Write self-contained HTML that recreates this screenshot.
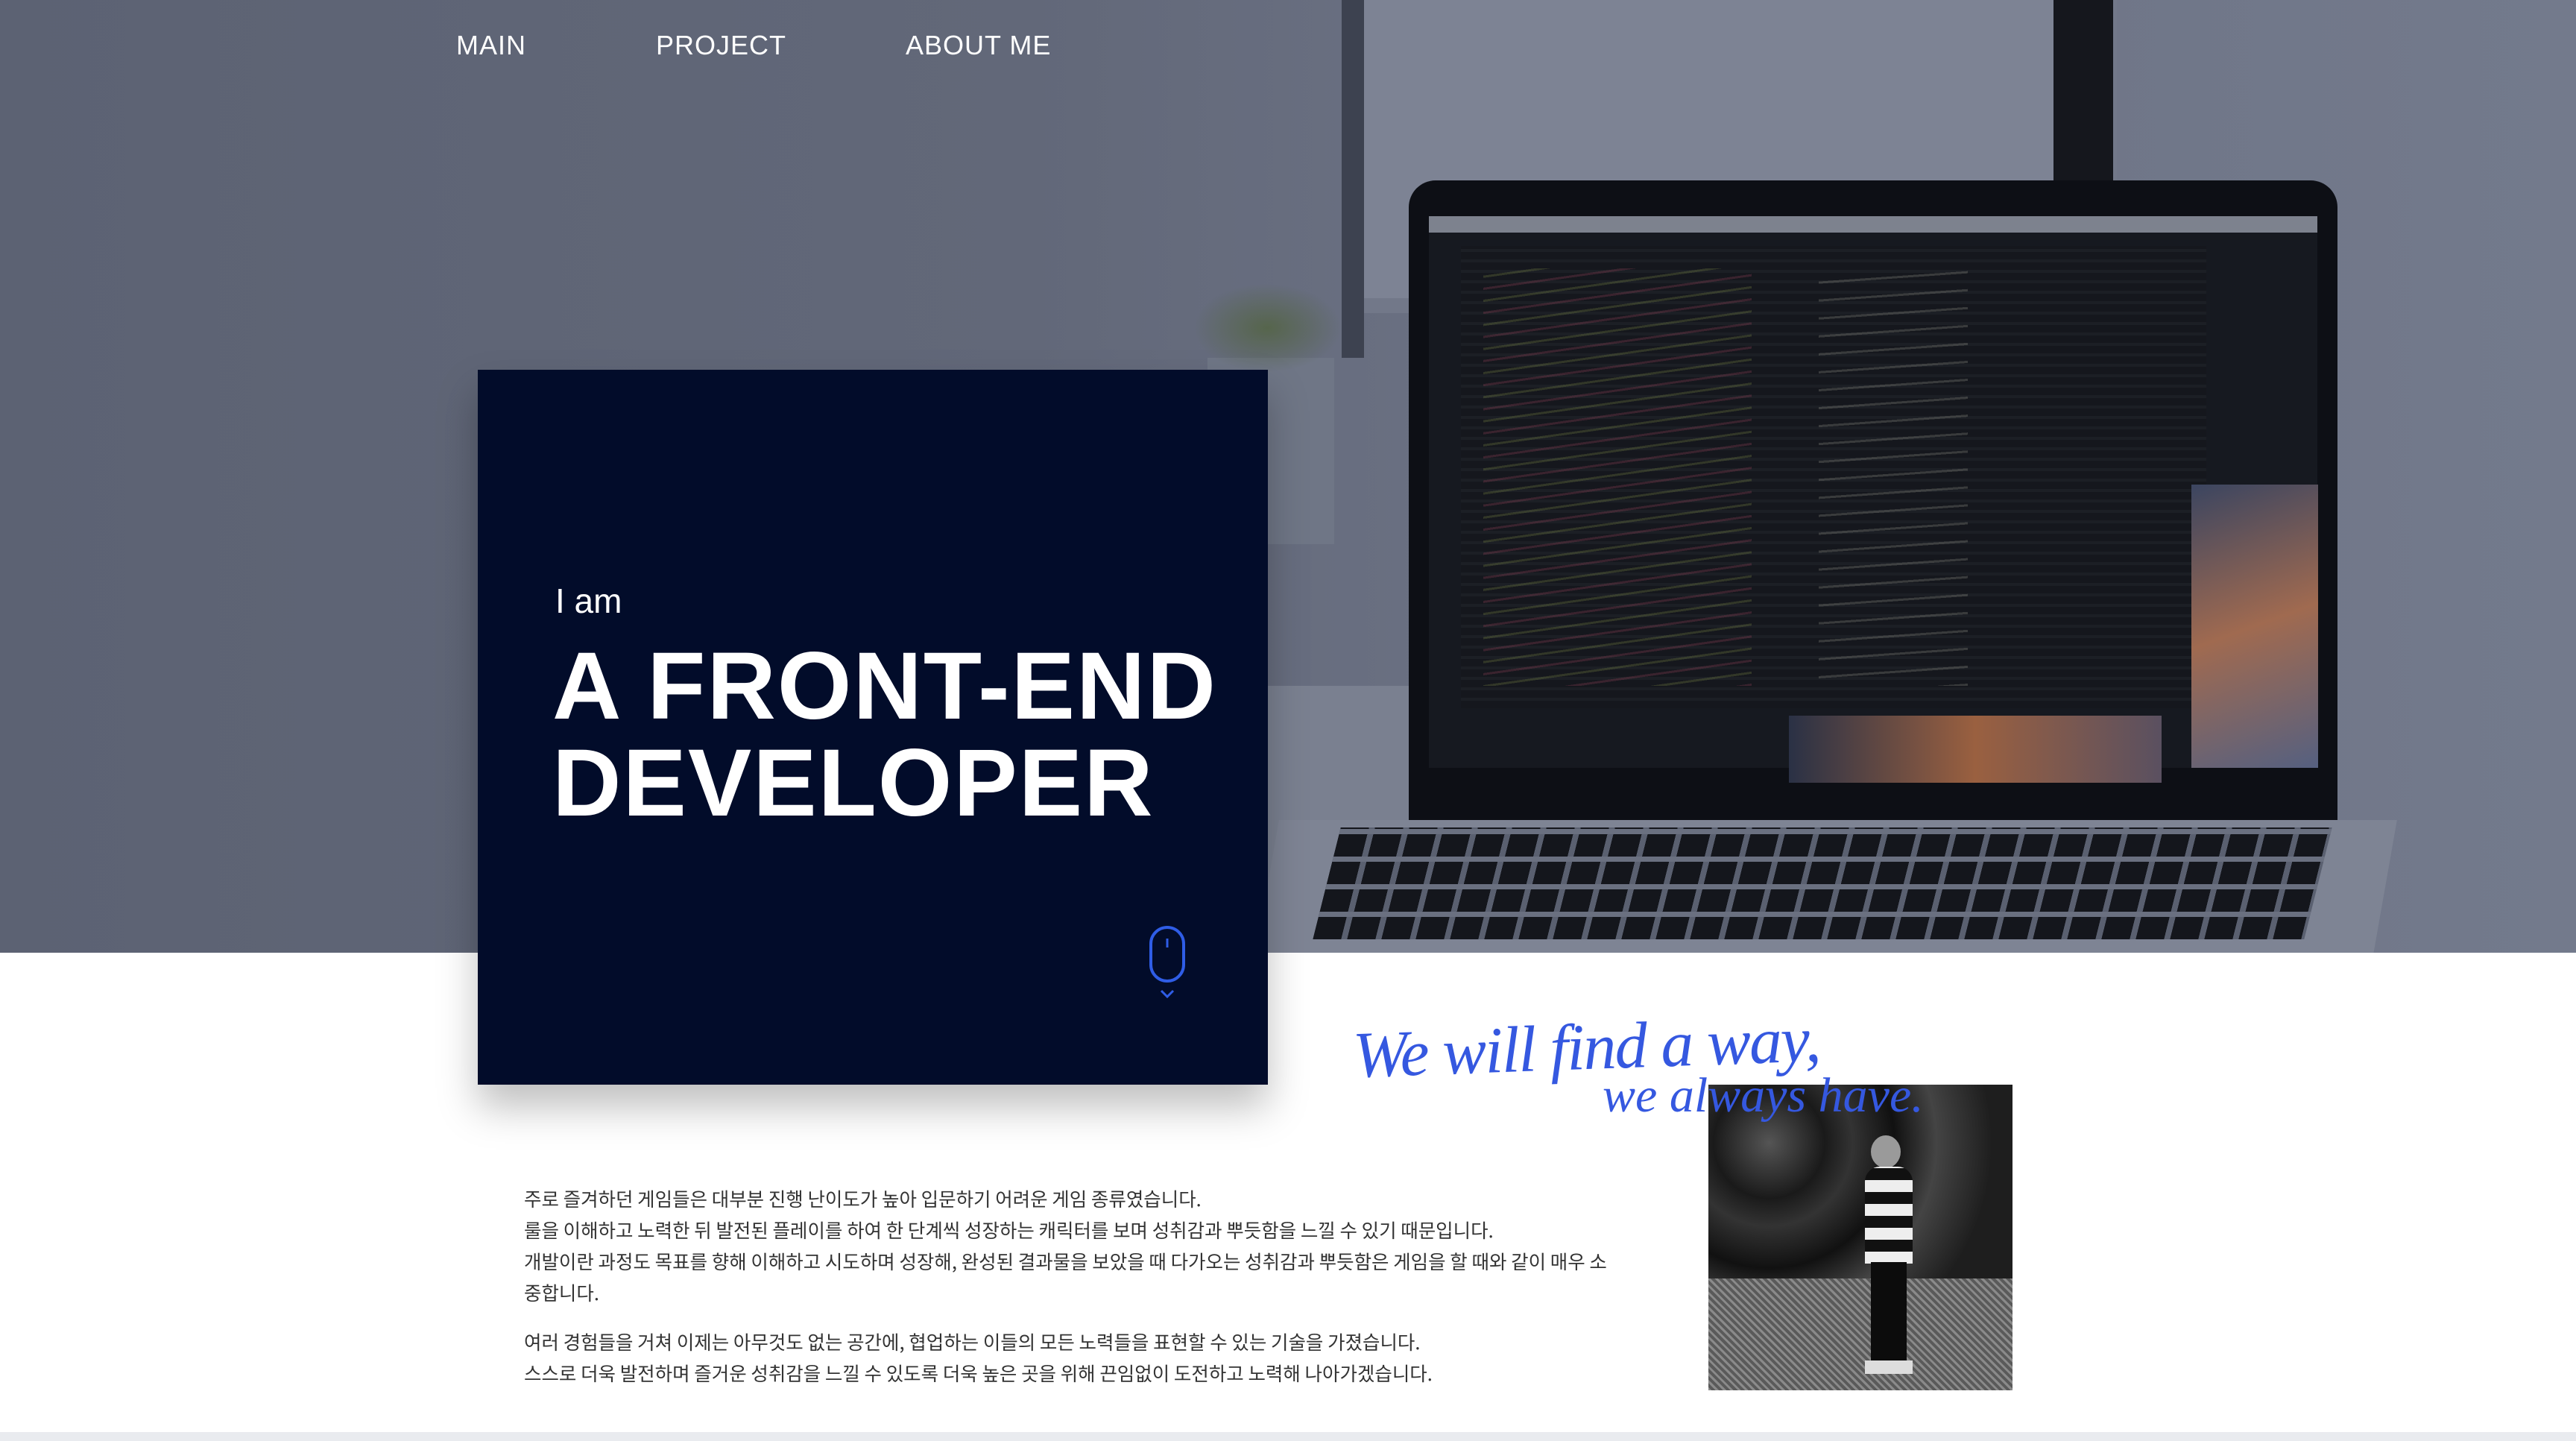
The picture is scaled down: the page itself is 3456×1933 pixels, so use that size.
<!DOCTYPE html>
<html><head><meta charset="utf-8">
<style>
*{margin:0;padding:0;box-sizing:border-box}
body{width:3456px;height:1933px;overflow:hidden;background:#fff;font-family:"Liberation Sans","Noto Sans CJK KR",sans-serif;position:relative}
.hero{position:absolute;left:0;top:0;width:3456px;height:1278px;background:linear-gradient(90deg,#5c6273 0%,#626879 40%,#6c7284 60%,#737a8c 100%);overflow:hidden}
.nav{position:absolute;top:40px;color:#fff;font-size:36px;letter-spacing:1px}
.abs{position:absolute}
.box{position:absolute;left:641px;top:496px;width:1060px;height:959px;background:#020c2a;box-shadow:0 30px 50px rgba(0,0,0,.25)}
.p{position:absolute;left:703px;font-family:"Noto Sans CJK KR",sans-serif;font-size:25.5px;color:#333;white-space:nowrap}
</style></head><body>
<div class="hero">
  <div class="abs" style="left:1810px;top:0;width:1030px;height:420px;background:#727889"></div>
  <div class="abs" style="left:1830px;top:0;width:930px;height:400px;background:#7d8394"></div>
  <div class="abs" style="left:2755px;top:0;width:80px;height:245px;background:#15171d"></div>
  <div class="abs" style="left:1800px;top:0;width:30px;height:480px;background:#3d4250"></div>
  <div class="abs" style="left:1620px;top:480px;width:170px;height:250px;background:#6f7686"></div>
  <div class="abs" style="left:1600px;top:380px;width:200px;height:120px;background:radial-gradient(ellipse,#56654c 0%,rgba(90,100,80,0) 70%)"></div>
  <div class="abs" style="left:1700px;top:920px;width:220px;height:360px;background:#7a8090"></div>
  <div class="abs" style="left:1890px;top:242px;width:1246px;height:940px;background:#0d0f15;border-radius:36px 36px 0 0"></div>
  <div class="abs" style="left:1917px;top:290px;width:1192px;height:740px;background:#161920"></div>
  <div class="abs" style="left:1917px;top:290px;width:1192px;height:22px;background:#7d828e"></div>
  <div class="abs" style="left:1960px;top:330px;width:1000px;height:620px;background:repeating-linear-gradient(0deg,#15171d 0 10px,#1c1f25 10px 14px)"></div>
  <div class="abs" style="left:1990px;top:360px;width:360px;height:560px;opacity:.6;background:repeating-linear-gradient(-8deg,rgba(200,80,110,.35) 0 3px,rgba(0,0,0,0) 3px 16px,rgba(180,200,90,.3) 16px 19px,rgba(0,0,0,0) 19px 32px)"></div>
  <div class="abs" style="left:2440px;top:360px;width:200px;height:560px;opacity:.6;background:repeating-linear-gradient(-4deg,rgba(220,220,200,.3) 0 3px,rgba(0,0,0,0) 3px 24px)"></div>
  <div class="abs" style="left:2940px;top:650px;width:170px;height:380px;background:linear-gradient(160deg,#3b4560,#a06a50 50%,#556080)"></div>
  <div class="abs" style="left:2400px;top:960px;width:500px;height:90px;background:linear-gradient(90deg,#2a3145,#9a6040,#5a5060)"></div>
  <div class="abs" style="left:1700px;top:1100px;width:1500px;height:180px;background:#7e8494;transform:skewX(-10deg)"></div>
  <div class="abs" style="left:1780px;top:1110px;width:1330px;height:150px;background:repeating-linear-gradient(90deg,#14161c 0 38px,#5a6070 38px 46px);transform:skewX(-14deg)"></div>
  <div class="abs" style="left:1780px;top:1110px;width:1330px;height:150px;background:repeating-linear-gradient(0deg,rgba(0,0,0,0) 0 30px,#6a7080 30px 37px);transform:skewX(-14deg)"></div>
  <div class="nav" style="left:612px">MAIN</div>
  <div class="nav" style="left:880px">PROJECT</div>
  <div class="nav" style="left:1215px">ABOUT ME</div>
</div>
<div class="box">
  <div class="abs" style="left:104px;top:283px;color:#fff;font-size:46px;">I am</div>
  <div class="abs" style="left:100px;top:360px;color:#fff;font-size:128px;font-weight:bold;line-height:130px;letter-spacing:2px;white-space:nowrap">A FRONT-END<br>DEVELOPER</div>
  <svg class="abs" style="left:895px;top:745px" width="60" height="110" viewBox="0 0 60 110">
    <rect x="8" y="3" width="44" height="72" rx="22" fill="none" stroke="#2f5de6" stroke-width="4"/>
    <line x1="30" y1="18" x2="30" y2="30" stroke="#2f5de6" stroke-width="3"/>
    <polyline points="22,88 30,96 38,88" fill="none" stroke="#2f5de6" stroke-width="3"/>
  </svg>
</div>
<div class="abs" style="left:2292px;top:1455px;width:408px;height:410px;background:#333;overflow:hidden">
  <div class="abs" style="left:0;top:0;width:408px;height:260px;background:radial-gradient(circle at 20% 30%,#555 0,#1a1a1a 20%,#333 30%,#111 45%,#444 60%,#1e1e1e 80%)"></div>
  <div class="abs" style="left:0;top:260px;width:408px;height:150px;background:repeating-linear-gradient(45deg,#8a8a8a 0 3px,#5a5a5a 3px 7px)"></div>
  <div class="abs" style="left:218px;top:68px;width:40px;height:44px;border-radius:50%;background:#9a9a9a"></div>
  <div class="abs" style="left:210px;top:110px;width:64px;height:130px;background:repeating-linear-gradient(0deg,#eee 0 16px,#111 16px 32px);border-radius:20px 20px 0 0"></div>
  <div class="abs" style="left:218px;top:238px;width:48px;height:140px;background:#0c0c0c"></div>
  <div class="abs" style="left:210px;top:370px;width:64px;height:18px;background:#ddd"></div>
</div>
<div class="abs" style="left:1815px;top:1355px;color:#3558e0;font-family:'Liberation Serif',serif;font-style:italic;font-size:88px;letter-spacing:-2px;white-space:nowrap;transform:rotate(-2deg)">We will find a way,</div>
<div class="abs" style="left:2150px;top:1432px;color:#3558e0;font-family:'Liberation Serif',serif;font-style:italic;font-size:66px;white-space:nowrap">we always have.</div>
<div class="p" style="top:1589px">주로 즐겨하던 게임들은 대부분 진행 난이도가 높아 입문하기 어려운 게임 종류였습니다.</div>
<div class="p" style="top:1631px">룰을 이해하고 노력한 뒤 발전된 플레이를 하여 한 단계씩 성장하는 캐릭터를 보며 성취감과 뿌듯함을 느낄 수 있기 때문입니다.</div>
<div class="p" style="top:1673px">개발이란 과정도 목표를 향해 이해하고 시도하며 성장해, 완성된 결과물을 보았을 때 다가오는 성취감과 뿌듯함은 게임을 할 때와 같이 매우 소</div>
<div class="p" style="top:1715px">중합니다.</div>
<div class="p" style="top:1781px">여러 경험들을 거쳐 이제는 아무것도 없는 공간에, 협업하는 이들의 모든 노력들을 표현할 수 있는 기술을 가졌습니다.</div>
<div class="p" style="top:1823px">스스로 더욱 발전하며 즐거운 성취감을 느낄 수 있도록 더욱 높은 곳을 위해 끈임없이 도전하고 노력해 나아가겠습니다.</div>
<div class="abs" style="left:0;top:1921px;width:3456px;height:12px;background:#e9ebef"></div>
</body></html>
